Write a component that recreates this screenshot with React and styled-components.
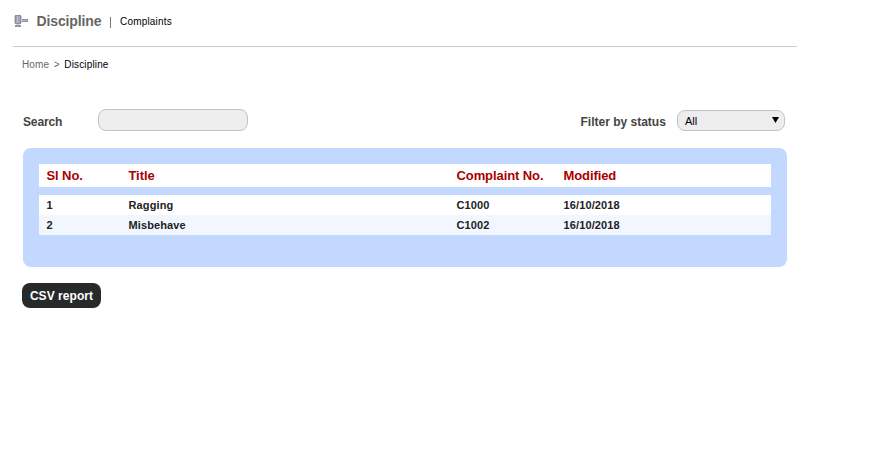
import React from "react";
import styled, { createGlobalStyle } from "styled-components";

const GlobalStyle = createGlobalStyle`
  * { box-sizing: border-box; }
  body {
    margin: 0;
    background: #fff;
    font-family: "Liberation Sans", Arial, sans-serif;
    color: #222;
  }
`;

const Page = styled.main`
  width: 797px;
  padding-left: 13px;
`;

const Header = styled.header`
  display: flex;
  align-items: center;
  height: 47px;
  padding: 0 0 4px 1px;
  border-bottom: 1px solid #ccc;
`;

const Title = styled.h1`
  margin: 0 0 0 8.5px;
  font-size: 14px;
  line-height: 16px;
  letter-spacing: -0.13px;
  color: #666;
`;

const Divider = styled.span`
  width: 1px;
  height: 11px;
  margin: 2px 9px 0 8.7px;
  background: #777;
`;

const Subtitle = styled.span`
  font-size: 10px;
  line-height: 12px;
  letter-spacing: 0.18px;
  color: #000;
  margin-top: 1px;
`;

const Breadcrumb = styled.nav`
  display: flex;
  gap: 4.5px;
  padding: 12px 0 0 9px;
  font-size: 10px;
  line-height: 12px;
  letter-spacing: 0.15px;
  color: #000;
`;

const Crumb = styled.span`
  color: ${(p) => (p.$current ? "#000" : "#666")};
`;

const Filters = styled.div`
  display: flex;
  align-items: center;
  height: 22px;
  margin: 38px 12px 0 10px;
`;

const Label = styled.label`
  width: ${(p) => p.$width}px;
  font-size: 12px;
  line-height: 14px;
  font-weight: bold;
  letter-spacing: ${(p) => (p.$end ? "0" : "-0.15px")};
  color: #444;
  padding-top: 3px;
  margin-left: ${(p) => (p.$end ? "auto" : "0")};
`;

const SearchInput = styled.input`
  width: 150px;
  height: 22px;
  padding: 0 8px;
  border: 1px solid #c3c3c3;
  border-radius: 8px;
  background: #ededed;
  outline: none;
`;

const StatusSelect = styled.button`
  display: flex;
  align-items: center;
  justify-content: space-between;
  width: 108px;
  height: 21px;
  margin-top: 1px;
  padding: 2px 5px 0 7px;
  border: 1px solid #c3c3c3;
  border-radius: 8px;
  background: #ededed;
  font: 11px/13px "Liberation Sans", Arial, sans-serif;
  color: #000;
`;

const Arrow = styled.svg`
  display: block;
  margin-top: -3px;
`;

const Panel = styled.section`
  height: 119px;
  margin: 17px 10px 0 10px;
  padding: 16px;
  border-radius: 8px;
  background: #c3d8ff;
`;

const Row = styled.div`
  display: grid;
  grid-template-columns: 82px 328px 107px 1fr;
  align-items: center;
  height: 20px;
  padding-left: 7.5px;
  background: ${(p) => (p.$alt ? "#f1f6ff" : "#fff")};
  font-size: 11px;
  line-height: 13px;
  font-weight: bold;
  letter-spacing: 0.12px;
  color: #222;
`;

const HeadRow = styled(Row)`
  height: 23px;
  margin-bottom: 8px;
  font-size: 13px;
  line-height: 15px;
  letter-spacing: -0.09px;
  color: #a00;
`;

const ReportButton = styled.button`
  display: block;
  width: 79px;
  height: 25px;
  margin: 16px 0 0 9px;
  padding: 1px 0 0;
  border: 0;
  border-radius: 8px;
  background: #272a2b;
  color: #fff;
  font: bold 12px/14px "Liberation Sans", Arial, sans-serif;
  letter-spacing: 0.05px;
`;

const GavelIcon = () => (
  <svg width="14" height="13" viewBox="0 0 14 13" shapeRendering="crispEdges">
    <rect x="0" y="1" width="8" height="7" fill="#c9ccd6" />
    <rect x="1" y="0" width="6" height="9" fill="#8a8ea1" />
    <rect x="2" y="1" width="4" height="7" fill="#a3a7b7" />
    <rect x="3" y="1" width="1" height="7" fill="#b9bdca" />
    <rect x="8" y="4" width="6" height="3" fill="#8f93a5" />
    <rect x="8" y="5" width="5" height="1" fill="#b0b4c2" />
    <rect x="2" y="9" width="4" height="1" fill="#d5d8e0" />
    <rect x="1" y="10" width="6" height="2" fill="#8f93a5" />
  </svg>
);

const complaints = [
  { title: "Ragging", number: "C1000", modified: "16/10/2018" },
  { title: "Misbehave", number: "C1002", modified: "16/10/2018" },
];

export default function App() {
  return (
    <>
      <GlobalStyle />
      <Page>
        <Header>
          <GavelIcon />
          <Title>Discipline</Title>
          <Divider />
          <Subtitle>Complaints</Subtitle>
        </Header>
        <Breadcrumb>
          <Crumb>Home</Crumb>
          <Crumb>&gt;</Crumb>
          <Crumb $current>Discipline</Crumb>
        </Breadcrumb>
        <Filters>
          <Label $width={75} htmlFor="search">Search</Label>
          <SearchInput id="search" />
          <Label $width={96.5} $end>Filter by status</Label>
          <StatusSelect type="button">
            All
            <Arrow width="7" height="6" viewBox="0 0 7 6">
              <path d="M0 0h7L3.5 6z" fill="#000" />
            </Arrow>
          </StatusSelect>
        </Filters>
        <Panel>
          <HeadRow>
            <span>Sl No.</span>
            <span>Title</span>
            <span>Complaint No.</span>
            <span>Modified</span>
          </HeadRow>
          {complaints.map((c, i) => (
            <Row key={c.number} $alt={i % 2 === 1}>
              <span>{i + 1}</span>
              <span>{c.title}</span>
              <span>{c.number}</span>
              <span>{c.modified}</span>
            </Row>
          ))}
        </Panel>
        <ReportButton type="button">CSV report</ReportButton>
      </Page>
    </>
  );
}
